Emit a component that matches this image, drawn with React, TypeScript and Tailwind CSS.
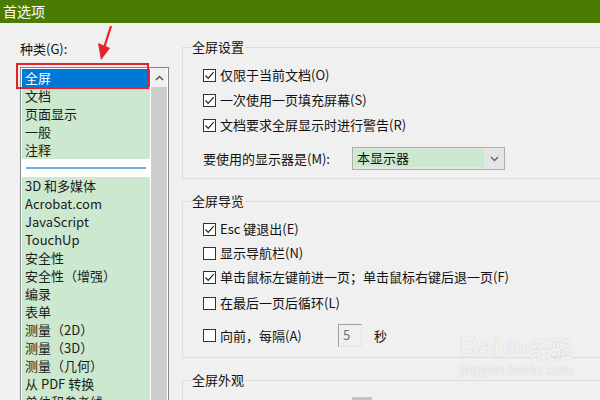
const listItems: (string | null)[] = [
  "全屏",
  "文档",
  "页面显示",
  "一般",
  "注释",
  null,
  "3D 和多媒体",
  "Acrobat.com",
  "JavaScript",
  "TouchUp",
  "安全性",
  "安全性（增强）",
  "编录",
  "表单",
  "测量（2D）",
  "测量（3D）",
  "测量（几何）",
  "从 PDF 转换",
  "单位和参考线",
];

const CheckBox = ({ on }: { on: boolean }) => (
  <span className="w-[13px] h-[13px] shrink-0 border border-[#333] bg-white flex items-center justify-center">
    {on && (
      <svg width="11" height="11" viewBox="0 0 11 11">
        <path d="M1.5 5.5 L4.2 8.3 L9.6 2.2" fill="none" stroke="#222" strokeWidth="1.2" />
      </svg>
    )}
  </span>
);

const Option = ({ on, label }: { on: boolean; label: string }) => (
  <div className="flex items-center gap-[4px] h-[18px] whitespace-nowrap">
    <CheckBox on={on} />
    <span>{label}</span>
  </div>
);

export default function App() {
  return (
    <div className="relative w-[600px] h-[400px] overflow-hidden bg-[#f0f0f0] text-[13px] leading-[18px] text-[#111] font-['Noto_Sans_CJK_SC',sans-serif]">
      {/* Title bar */}
      <div className="h-[23px] bg-[#4a7c04] text-white text-[14px] leading-[23px] pl-[3px]">首选项</div>

      <div className="flex">
        {/* Category list */}
        <div className="w-[182px] shrink-0 pl-[20px]">
          <div className="mt-[17px] h-[18px]">种类(G):</div>
          <div className="mt-[9px] w-[149px] h-[340px] border border-[#828790] bg-white flex">
            <div className="pl-[1px] pt-[1px] w-[129px]">
              {listItems.map((item, i) =>
                item === null ? (
                  <div key={i} className="h-[18px] bg-white flex items-center px-[4px]">
                    <div className="w-full h-[2px] bg-[#74b0e4]" />
                  </div>
                ) : (
                  <div
                    key={i}
                    className={
                      i === 0
                        ? "h-[18px] bg-[#0078d7] text-white pl-[3px] whitespace-nowrap"
                        : "h-[18px] bg-[#cce9cf] text-[#1b1b1b] pl-[3px] whitespace-nowrap"
                    }
                  >
                    {item}
                  </div>
                )
              )}
            </div>
            <div className="ml-[1px] w-[16px] flex flex-col">
              <div className="h-[19px] bg-[#f0f0f0] flex items-center justify-center">
                <svg width="9" height="6" viewBox="0 0 9 6">
                  <path d="M1 5 L4.5 1.5 L8 5" fill="none" stroke="#555" strokeWidth="1.5" />
                </svg>
              </div>
              <div className="flex-1 bg-[#cdcdcd]" />
            </div>
          </div>
        </div>

        {/* Settings */}
        <div className="flex-1">
          {/* 全屏设置 */}
          <fieldset className="mt-[15px] w-[440px] border border-[#dcdcdc]">
            <legend className="ml-[8px] px-[1px]">全屏设置</legend>
            <div className="pl-[20px] pt-[10px] pb-[8px] flex flex-col">
              <div className="flex flex-col gap-[7px]">
                <Option on label="仅限于当前文档(O)" />
                <Option on label="一次使用一页填充屏幕(S)" />
                <Option on label="文档要求全屏显示时进行警告(R)" />
              </div>
              <div className="mt-[13px] flex items-center h-[23px]">
                <span className="w-[149px] whitespace-nowrap">要使用的显示器是(M):</span>
                <div className="w-[153px] h-[23px] border border-[#adadad] bg-[#e5e5e5] flex">
                  <div className="flex-1 m-[1px] mb-[2px] bg-[#cce9cf] pl-[3px] leading-[18px]">本显示器</div>
                  <div className="w-[19px] flex items-center justify-center">
                    <svg width="9" height="6" viewBox="0 0 9 6">
                      <path d="M1 1 L4.5 4.5 L8 1" fill="none" stroke="#606060" strokeWidth="1.3" />
                    </svg>
                  </div>
                </div>
              </div>
            </div>
          </fieldset>

          {/* 全屏导览 */}
          <fieldset className="mt-[13px] w-[440px] border border-[#dcdcdc]">
            <legend className="ml-[8px] px-[1px]">全屏导览</legend>
            <div className="pl-[20px] pt-[10px] pb-[10px] flex flex-col">
              <Option on label="Esc 键退出(E)" />
              <div className="mt-[6px]">
                <Option on={false} label="显示导航栏(N)" />
              </div>
              <div className="mt-[6px]">
                <Option on label="单击鼠标左键前进一页；单击鼠标右键后退一页(F)" />
              </div>
              <div className="mt-[8px]">
                <Option on={false} label="在最后一页后循环(L)" />
              </div>
              <div className="mt-[12px] flex items-center h-[23px]">
                <CheckBox on={false} />
                <span className="ml-[4px] w-[118px] whitespace-nowrap">向前，每隔(A)</span>
                <div className="w-[24px] h-[23px] border-t border-l border-[#a0a0a0] border-b border-r border-b-[#e3e3e3] border-r-[#e3e3e3] bg-[#f0f0f0] text-[#707070] pl-[4px] leading-[20px]">
                  5
                </div>
                <span className="ml-[12px]">秒</span>
              </div>
            </div>
          </fieldset>

          {/* 全屏外观 */}
          <fieldset className="mt-[13px] w-[440px] h-[60px] border border-[#dcdcdc]">
            <legend className="ml-[8px] px-[1px]">全屏外观</legend>
            <div className="pl-[169px] pt-[8px]">
              <div className="w-[20px] h-[10px] bg-[#c4c4c4]" />
            </div>
          </fieldset>
        </div>
      </div>

      {/* Red highlight box over the selected category */}
      <div className="absolute left-[16px] top-[63px] w-[133px] h-[26px] border-[2.5px] border-[#e3222b]" />

      {/* Red arrow */}
      <svg className="absolute left-[92px] top-[22px]" width="24" height="42" viewBox="0 0 24 42">
        <path d="M19 4 L12 26" stroke="#e3222b" strokeWidth="2.2" fill="none" />
        <path d="M6 21 L18 26 L9 38 Z" fill="#e3222b" />
      </svg>

      {/* Watermark */}
      <div className="absolute left-[460px] top-[332px] flex flex-col items-center text-white/80 [text-shadow:0_0_1px_rgba(0,0,0,0.25)] pointer-events-none">
        <div className="flex items-end gap-[2px] font-['Liberation_Sans',sans-serif] font-bold text-[26px] leading-[30px]">
          <span>Bai</span>
          <span className="text-[20px]">du</span>
          <span className="text-[22px] font-['Noto_Sans_CJK_SC',sans-serif]">经验</span>
        </div>
        <div className="text-[14px] leading-[16px] font-['Liberation_Sans',sans-serif]">jingyan.baidu.com</div>
      </div>
    </div>
  );
}
